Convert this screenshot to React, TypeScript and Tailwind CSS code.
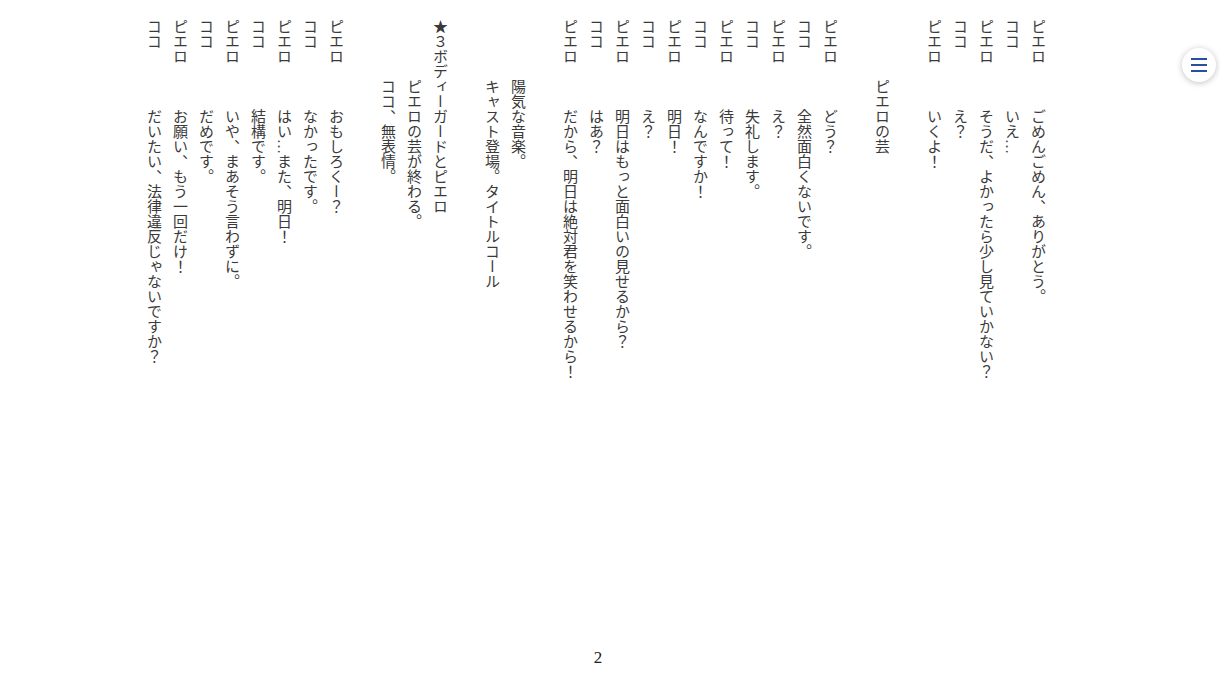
import React from 'react';

type Line =
  | { kind: 'dialogue'; speaker: string; text: string }
  | { kind: 'direction'; text: string }
  | { kind: 'heading'; text: string }
  | { kind: 'blank' };

const SCRIPT: Line[] = [
  { kind: 'dialogue', speaker: 'ピエロ', text: 'ごめんごめん、ありがとう。' },
  { kind: 'dialogue', speaker: 'ココ', text: 'いえ…' },
  { kind: 'dialogue', speaker: 'ピエロ', text: 'そうだ、よかったら少し見ていかない？' },
  { kind: 'dialogue', speaker: 'ココ', text: 'え？' },
  { kind: 'dialogue', speaker: 'ピエロ', text: 'いくよ！' },
  { kind: 'blank' },
  { kind: 'direction', text: 'ピエロの芸' },
  { kind: 'blank' },
  { kind: 'dialogue', speaker: 'ピエロ', text: 'どう？' },
  { kind: 'dialogue', speaker: 'ココ', text: '全然面白くないです。' },
  { kind: 'dialogue', speaker: 'ピエロ', text: 'え？' },
  { kind: 'dialogue', speaker: 'ココ', text: '失礼します。' },
  { kind: 'dialogue', speaker: 'ピエロ', text: '待って！' },
  { kind: 'dialogue', speaker: 'ココ', text: 'なんですか！' },
  { kind: 'dialogue', speaker: 'ピエロ', text: '明日！' },
  { kind: 'dialogue', speaker: 'ココ', text: 'え？' },
  { kind: 'dialogue', speaker: 'ピエロ', text: '明日はもっと面白いの見せるから？' },
  { kind: 'dialogue', speaker: 'ココ', text: 'はあ？' },
  { kind: 'dialogue', speaker: 'ピエロ', text: 'だから、明日は絶対君を笑わせるから！' },
  { kind: 'blank' },
  { kind: 'direction', text: '陽気な音楽。' },
  { kind: 'direction', text: 'キャスト登場。タイトルコール' },
  { kind: 'blank' },
  { kind: 'heading', text: '★３ボディーガードとピエロ' },
  { kind: 'direction', text: 'ピエロの芸が終わる。' },
  { kind: 'direction', text: 'ココ、無表情。' },
  { kind: 'blank' },
  { kind: 'dialogue', speaker: 'ピエロ', text: 'おもしろくー？' },
  { kind: 'dialogue', speaker: 'ココ', text: 'なかったです。' },
  { kind: 'dialogue', speaker: 'ピエロ', text: 'はい…また、明日！' },
  { kind: 'dialogue', speaker: 'ココ', text: '結構です。' },
  { kind: 'dialogue', speaker: 'ピエロ', text: 'いや、まあそう言わずに。' },
  { kind: 'dialogue', speaker: 'ココ', text: 'だめです。' },
  { kind: 'dialogue', speaker: 'ピエロ', text: 'お願い、もう一回だけ！' },
  { kind: 'dialogue', speaker: 'ココ', text: 'だいたい、法律違反じゃないですか？' },
];

function ScriptLine({ line }: { line: Line }) {
  if (line.kind === 'blank') {
    return <div className="w-[26px]">&nbsp;</div>;
  }
  if (line.kind === 'heading') {
    return <div className="whitespace-nowrap">{line.text}</div>;
  }
  if (line.kind === 'direction') {
    return <div className="whitespace-nowrap pt-[60px]">{line.text}</div>;
  }
  return (
    <div className="whitespace-nowrap">
      <span className="inline-block h-[90px]">{line.speaker}</span>
      <span>{line.text}</span>
    </div>
  );
}

export default function App() {
  return (
    <div
      className="relative h-[686px] bg-white text-[#3a3a3a]"
      style={{ fontFamily: '"Liberation Serif", "Noto Sans CJK JP", serif' }}
    >
      <div className="ml-[136px] w-[914px] h-[648px] pt-[19px] [writing-mode:vertical-rl] text-[15px] leading-[26px] overflow-hidden">
        {SCRIPT.map((line, i) => (
          <ScriptLine key={i} line={line} />
        ))}
      </div>

      <div className="ml-[136px] w-[924px] text-center text-[17px] leading-[20px] text-[#222]">2</div>

      <button
        type="button"
        aria-label="メニュー"
        className="absolute top-[48px] left-[1182px] w-[34px] h-[34px] rounded-full bg-white shadow-[0_1px_6px_rgba(0,0,0,0.25)] flex flex-col items-center justify-center gap-[4px]"
      >
        <span className="block w-[16px] h-[2px] bg-[#2b4ea2]" />
        <span className="block w-[16px] h-[2px] bg-[#2b4ea2]" />
        <span className="block w-[16px] h-[2px] bg-[#2b4ea2]" />
      </button>
    </div>
  );
}
